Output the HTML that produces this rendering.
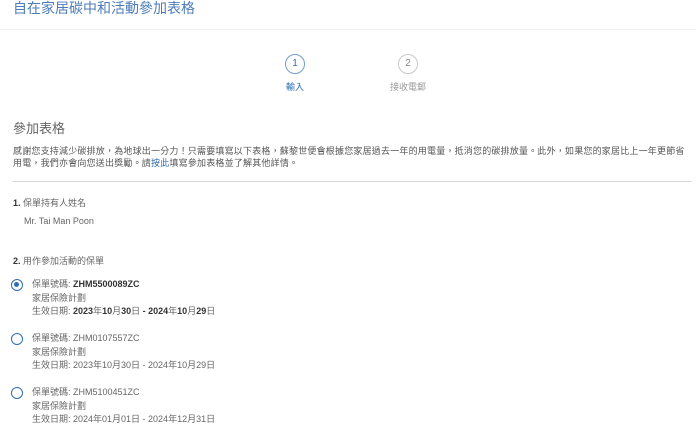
<!DOCTYPE html>
<html><head><meta charset="utf-8"><style>
*{margin:0;padding:0;box-sizing:border-box}
body{width:696px;height:434px;background:#fff;position:relative;overflow:hidden;font-family:"Liberation Sans","Noto Sans CJK TC",sans-serif;color:#555}
.a{position:absolute;white-space:nowrap}
.c{position:absolute;width:20px;height:20px;border-radius:50%;font-size:10px;text-align:center;line-height:18px}
.r{position:absolute;left:11px;width:12px;height:12px;border:1.5px solid #2f6db5;border-radius:50%}
.t{font-size:9px;color:#666;line-height:13.5px}
.t b{color:#333;font-weight:bold}
</style></head><body>
<div class="a" style="left:13px;top:-1px;font-size:14px;color:#4d7db8;line-height:18px">自在家居碳中和活動參加表格</div>
<div class="a" style="left:0;top:29px;width:696px;height:1px;background:#f0f0f0"></div>
<div class="c" style="left:285px;top:54px;border:1.5px solid #6f9bd0;color:#2f6db5">1</div>
<div class="c" style="left:398px;top:54px;border:1.5px solid #c8c8c8;color:#888">2</div>
<div class="a" style="left:286px;top:80px;font-size:9px;color:#2f6db5">輸入</div>
<div class="a" style="left:390px;top:80px;font-size:9px;color:#999">接收電郵</div>
<div class="a" style="left:13px;top:118px;font-size:13px;color:#666">參加表格</div>
<div class="a t" style="left:13px;top:146px;color:#555;line-height:11.5px;letter-spacing:0.2px">感謝您支持減少碳排放，為地球出一分力！只需要填寫以下表格，蘇黎世便會根據您家居過去一年的用電量，抵消您的碳排放量。此外，如果您的家居比上一年更節省<br>用電，我們亦會向您送出獎勵。請<span style="color:#2f6db5">按此</span>填寫參加表格並了解其他詳情。</div>
<div class="a" style="left:12px;top:181px;width:680px;height:1px;background:#d8d8d8"></div>
<div class="a t" style="left:13px;top:197px"><b style="font-weight:bold">1.</b> 保單持有人姓名</div>
<div class="a t" style="left:24px;top:215px">Mr. Tai Man Poon</div>
<div class="a t" style="left:13px;top:255px"><b>2.</b> 用作參加活動的保單</div>
<div class="r" style="top:279px"><div style="position:absolute;left:2px;top:2px;width:5px;height:5px;border-radius:50%;background:#2f6db5"></div></div>
<div class="a t" style="left:32px;top:278px">保單號碼: <b>ZHM5500089ZC</b><br>家居保險計劃<br>生效日期: <b>2023</b>年<b>10</b>月<b>30</b>日 <b>- 2024</b>年<b>10</b>月<b>29</b>日</div>
<div class="r" style="top:333px"></div>
<div class="a t" style="left:32px;top:332px">保單號碼: ZHM0107557ZC<br>家居保險計劃<br>生效日期: 2023年10月30日 - 2024年10月29日</div>
<div class="r" style="top:387px"></div>
<div class="a t" style="left:32px;top:386px">保單號碼: ZHM5100451ZC<br>家居保險計劃<br>生效日期: 2024年01月01日 - 2024年12月31日</div>
</body></html>
